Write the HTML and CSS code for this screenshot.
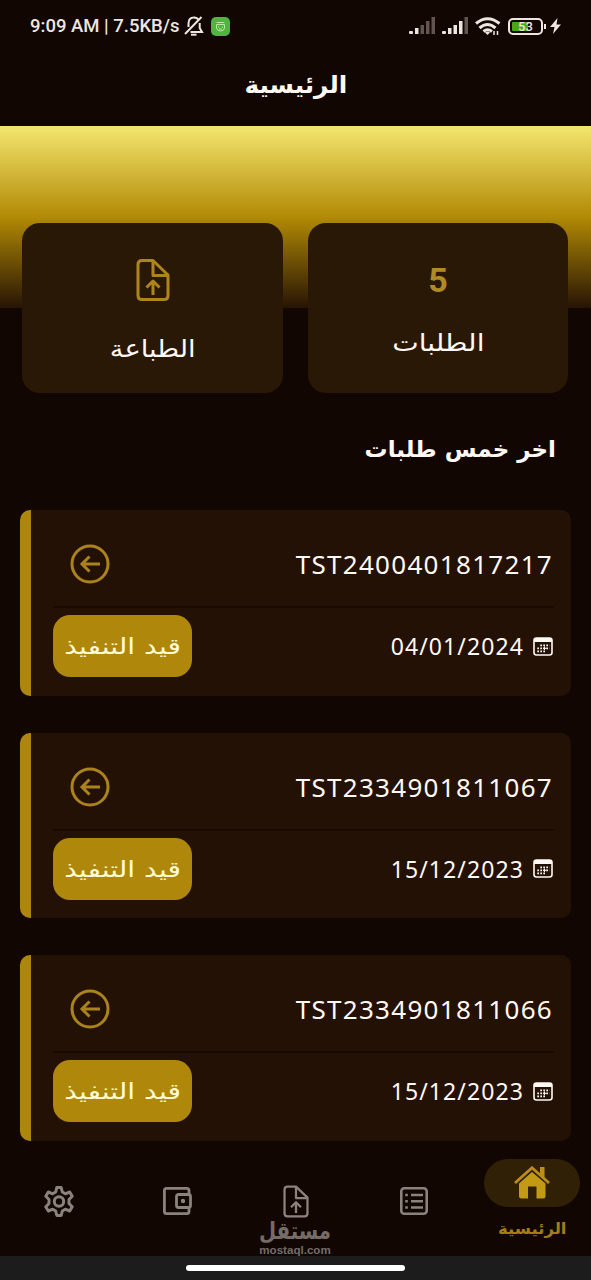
FILE: index.html
```html
<!DOCTYPE html>
<html lang="ar" dir="rtl">
<head>
<meta charset="utf-8">
<meta name="viewport" content="width=device-width">
<title>الرئيسية</title>
<link rel="stylesheet" href="styles.css">
</head>
<body>
<svg width="0" height="0" class="defs">
  <symbol id="file-up" viewBox="0 0 34 42"><g fill="none" stroke="currentColor" stroke-width="3" stroke-linejoin="round"><path d="M6 1.500H17L32 16V36.500Q32 40.500 28 40.500H6Q2 40.500 2 36.500V5.500Q2 1.500 6 1.500Z"/><path d="M17 2V16.500H31.500"/><path d="M17 36V23M10.500 28.500L17 22L23.500 28.500"/></g></symbol>
  <symbol id="back" viewBox="0 0 40 40"><g fill="none" stroke="currentColor" stroke-width="3"><circle cx="20" cy="20" r="18"/><path d="M30 20H12M19.500 12.500L12 20L19.500 27.500"/></g></symbol>
  <symbol id="calendar" viewBox="0 0 20 19"><rect x="1" y="1" width="18" height="17" rx="2.500" fill="none" stroke="currentColor" stroke-width="1.600"/><path d="M1 3Q1 1 3 1H17Q19 1 19 3V5H1Z" fill="currentColor"/><path d="M7.300 8.300H16.500M4.300 11.300H16.500M4.300 14.300H13" stroke="currentColor" stroke-width="1.700" stroke-dasharray="1.700 1.300"/><path d="M11.500 9.500V13M10 11.300H13.500" stroke="currentColor" stroke-width="1"/></symbol>
</svg>
<div class="screen">
  <div class="status" dir="ltr">
    <span class="clock">9:09 AM | 7.5KB/s</span>
    <svg class="bell" viewBox="0 0 20 20" fill="none" stroke="currentColor" stroke-width="2"><path d="M14.800 4.200C13.500 2.200 11.800 1.500 10 1.500C6.500 1.500 4.500 4 4.500 7.500V11M15.700 7V12L18 16H6.500M1 18L17.500 1"/><path d="M7 18.700H12.500" stroke-width="2"/></svg>
    <svg class="app" viewBox="0 0 19 19"><rect width="19" height="19" rx="5" fill="#4fb53c"/><g fill="none" stroke="#b9eaa5"><path d="M6 6V5.500H13V6M5.500 7.500H13.500V11Q13 14 9.500 14Q6 14 5.500 11Z"/><path d="M7.500 9.500V10.500M11.500 9.500V10.500M8 12H11"/></g></svg>
    <svg class="signals" viewBox="0 0 60 18" fill="#eee5e1"><rect x="0" y="14" width="4" height="3" rx="1"/><rect x="6" y="11" width="3.500" height="6"/><g fill="#625450"><rect x="11.500" y="8" width="3.500" height="9"/><rect x="17" y="4" width="3.500" height="13"/><rect x="22.500" y="0" width="3.500" height="17"/></g><rect x="33" y="14" width="4" height="3" rx="1"/><rect x="39" y="11" width="3.500" height="6"/><rect x="44.500" y="8" width="3.500" height="9"/><rect x="50" y="4" width="3.500" height="13"/><rect x="55.500" y="0" width="3.500" height="17" fill="#625450"/></svg>
    <svg class="wifi" viewBox="0 0 26 19" fill="none" stroke="#eee5e1" stroke-width="3"><path d="M1 6.500Q12.500-3 24.500 6.500M4.500 11Q12.500 4 20.500 11M8.500 14.500Q12.500 11 17 14.500"/><path d="M10 15.500Q12.500 13.500 15 15.500L12.500 18Z" fill="#eee5e1" stroke="none"/><path d="M19 14V18M22.500 14V18" stroke-width="1.500"/></svg>
    <div class="battery"><span>53</span></div>
    <svg class="bolt" viewBox="0 0 11 16"><path d="M7.500 0L0 9H4.500L3 16L11 6.500H6.500Z" fill="#eee5e1"/></svg>
  </div>
  <header class="title"><h1>الرئيسية</h1></header>
  <div class="hero"></div>
  <section class="stats">
    <div class="stat"><strong>5</strong><span class="requests">الطلبات</span></div>
    <div class="stat print"><svg><use href="#file-up"/></svg><span>الطباعة</span></div>
  </section>
  <h2>اخر خمس طلبات</h2>
  <main class="orders">
    <article class="order"><div class="top"><b>TST2400401817217</b><svg><use href="#back"/></svg></div><div class="bottom"><span class="date"><svg><use href="#calendar"/></svg><time>04/01/2024</time></span><span class="badge"><i>قيد التنفيذ</i></span></div></article>
    <article class="order"><div class="top"><b>TST2334901811067</b><svg><use href="#back"/></svg></div><div class="bottom"><span class="date"><svg><use href="#calendar"/></svg><time>15/12/2023</time></span><span class="badge"><i>قيد التنفيذ</i></span></div></article>
    <article class="order"><div class="top"><b>TST2334901811066</b><svg><use href="#back"/></svg></div><div class="bottom"><span class="date"><svg><use href="#calendar"/></svg><time>15/12/2023</time></span><span class="badge"><i>قيد التنفيذ</i></span></div></article>
  </main>
  <nav class="nav">
    <a class="home"><span class="pill"><svg viewBox="0 0 36 33"><path d="M26 1H30.500V12L26 7.500Z" fill="#bd8d19"/><path d="M1 17L18 1.800L35 17" fill="none" stroke="#bd8d19" stroke-width="2.800"/><path d="M5 17.500L18 6L31.500 17.500V30Q31.500 32.500 29 32.500H22.500V20.500H14V32.500H7.500Q5 32.500 5 30Z" fill="#c39a13"/></svg></span><em>الرئيسية</em></a>
    <a><svg class="list" viewBox="0 0 28 28" fill="none" stroke="currentColor" stroke-width="2.600"><rect x="1.300" y="1.300" width="25.400" height="25.400" rx="3"/><path d="M11 8H23M11 14.200H23M11 20.500H23M5.200 8H7.800M5.200 14.200H7.800M5.200 20.500H7.800"/></svg></a>
    <a><svg class="file"><use href="#file-up"/></svg></a>
    <a><svg class="wallet" viewBox="0 0 29 28" fill="none" stroke="currentColor" stroke-width="2.800"><path d="M26 7V3.500Q26 1.400 23.800 1.400H3.500Q1.400 1.400 1.400 3.500V24.500Q1.400 26.600 3.500 26.600H23.800Q26 26.600 26 24.500V21"/><rect x="13.500" y="7.500" width="14" height="13" rx="2"/><circle cx="20" cy="14" r="2.200" fill="currentColor" stroke="none"/></svg></a>
    <a><svg class="gear" viewBox="0 0 30 31" fill="none" stroke="currentColor" stroke-width="3" stroke-linejoin="round"><path d="M12.800 1.500H17.200L18.300 6L21.300 7.800L25.700 6L28.200 10.300L25 13.500V17.500L28.200 20.700L25.700 25L21.300 23.200L18.300 25L17.200 29.500H12.800L11.700 25L8.700 23.200L4.300 25L1.800 20.700L5 17.500V13.500L1.800 10.300L4.300 6L8.700 7.800L11.700 6Z"/><circle cx="15" cy="15.500" r="4.700"/></svg></a>
    <div class="mark" dir="ltr"><span>مستقل</span><small>mostaql.com</small></div>
  </nav>
  <footer class="gesture"><span></span></footer>
</div>
</body>
</html>
```
FILE: styles.css
```css
* { box-sizing: border-box; }
body { margin: 0; background: #110602; color: #fff9f3; font-family: "Noto Sans", "DejaVu Sans", sans-serif; }
.defs { position: absolute; }
svg { display: block; flex: none; }
.screen { width: 591px; height: 1280px; display: flex; flex-direction: column; overflow: hidden; }
.status { height: 52px; flex: none; display: flex; align-items: center; padding: 0 30px; color: #eee5e1; }
.clock { width: 149px; font: 500 18.5px Roboto, sans-serif; white-space: nowrap; }
.bell { width: 20px; height: 20px; margin-left: 5px; }
.app { width: 19px; height: 19px; margin-left: 7px; }
.signals { width: 60px; height: 18px; margin-left: auto; }
.wifi { width: 26px; height: 19px; margin-left: 6px; }
.battery { width: 35px; height: 17px; margin-left: 7px; border: 2px solid #eee5e1; border-radius: 5px; padding: 2px; position: relative; background: linear-gradient(90deg, #4aa912 16px, #110602 16px) content-box; display: grid; place-items: center; font: 500 13px/9px Roboto, sans-serif; }
.battery::after { content: ""; position: absolute; left: 34px; top: 4px; width: 2px; height: 5px; background: #eee5e1; }
.bolt { width: 11px; height: 16px; margin-left: 7px; }
.title { height: 74px; flex: none; display: grid; place-items: center; padding-bottom: 9px; }
h1, h2 { margin: 0; font-family: "DejaVu Sans", sans-serif; font-weight: 700; line-height: 36px; white-space: nowrap; }
h1 { font-size: 24px; transform: scaleX(1.03); }
.hero { height: 182px; flex: none; background: linear-gradient(#f4e66f 0, #b28a05 50%, #271404 100%); }
.stats { display: grid; grid-template-columns: 260px 261px; gap: 25px; margin-top: -85px; padding-right: 23px; flex: none; }
.stat { height: 170px; border-radius: 18px; background: #2a1806; display: flex; flex-direction: column; align-items: center; padding-top: 37px; font: 24px/38px "DejaVu Sans", sans-serif; }
.stat strong { font: 700 34px/40px Roboto, sans-serif; color: #b08b25; }
.stat span { margin-top: 24px; transform: scaleX(1.14); }
.stat .requests { transform: scaleX(1.17); }
.stat svg { width: 34px; height: 42px; color: #ad851d; }
.stat.print { padding-top: 36px; }
.stat.print span { margin-top: 29px; }
h2 { font-size: 23px; margin-top: 38px; padding-right: 35px; }
.orders { display: flex; flex-direction: column; gap: 37px; margin: 43px 20px 0; flex: none; }
.order { height: 185.5px; border-radius: 10px; background: linear-gradient(90deg, #ae860a 11px, #241105 11px); padding: 0 17px 0 33px; }
.top { height: 98px; padding: 12px 1px 0 17px; display: flex; justify-content: space-between; align-items: center; border-bottom: 2px solid #180903; }
.top b { font-weight: 400; font-size: 26px; letter-spacing: 1.3px; }
.top svg { width: 40px; height: 40px; color: #aa831c; }
.bottom { display: flex; justify-content: space-between; align-items: center; height: 76px; }
.date { display: flex; align-items: center; gap: 9px; padding-right: 1px; font-size: 23px; letter-spacing: 1.1px; }
.date svg { width: 20px; height: 19px; }
.badge { width: 139px; height: 62px; border-radius: 17px; background: #ae870b; display: grid; place-items: center; font: 22px/32px "DejaVu Sans", sans-serif; color: #fffbd5; white-space: nowrap; }
.badge i { font-style: normal; transform: scaleX(1.28); padding-top: 2px; }
.nav { height: 116px; margin-top: -1px; flex: none; display: flex; position: relative; color: #8b817d; }
.nav a { width: 118.5px; height: 116px; display: flex; flex-direction: column; align-items: center; justify-content: center; padding-top: 7px; }
.nav .home { justify-content: flex-start; padding-top: 19px; color: #a47c18; }
.pill { width: 96px; height: 48px; border-radius: 24px; background: #302006; display: grid; place-items: center; }
.pill svg { width: 36px; height: 33px; }
.home em { font: 700 16px/28px "DejaVu Sans", sans-serif; margin-top: 8px; transform: scaleX(1.03); }
.list { width: 28px; height: 28px; }
.file { width: 26px; height: 33px; }
.wallet { width: 29px; height: 28px; }
.gear { width: 30px; height: 31px; }
.mark { position: absolute; left: 235px; top: 79px; width: 120px; text-align: center; color: #756c68; }
.mark span { display: block; font: 700 24px/24px "DejaVu Sans", sans-serif; transform: scaleX(0.82); }
.mark small { display: block; font: 700 11.6px/13px "Liberation Sans", sans-serif; }
.gesture { height: 25px; flex: none; background: #1c1c1c; display: flex; justify-content: center; padding-top: 9px; }
.gesture span { width: 219px; height: 6px; border-radius: 3px; background: #fff; }
```
